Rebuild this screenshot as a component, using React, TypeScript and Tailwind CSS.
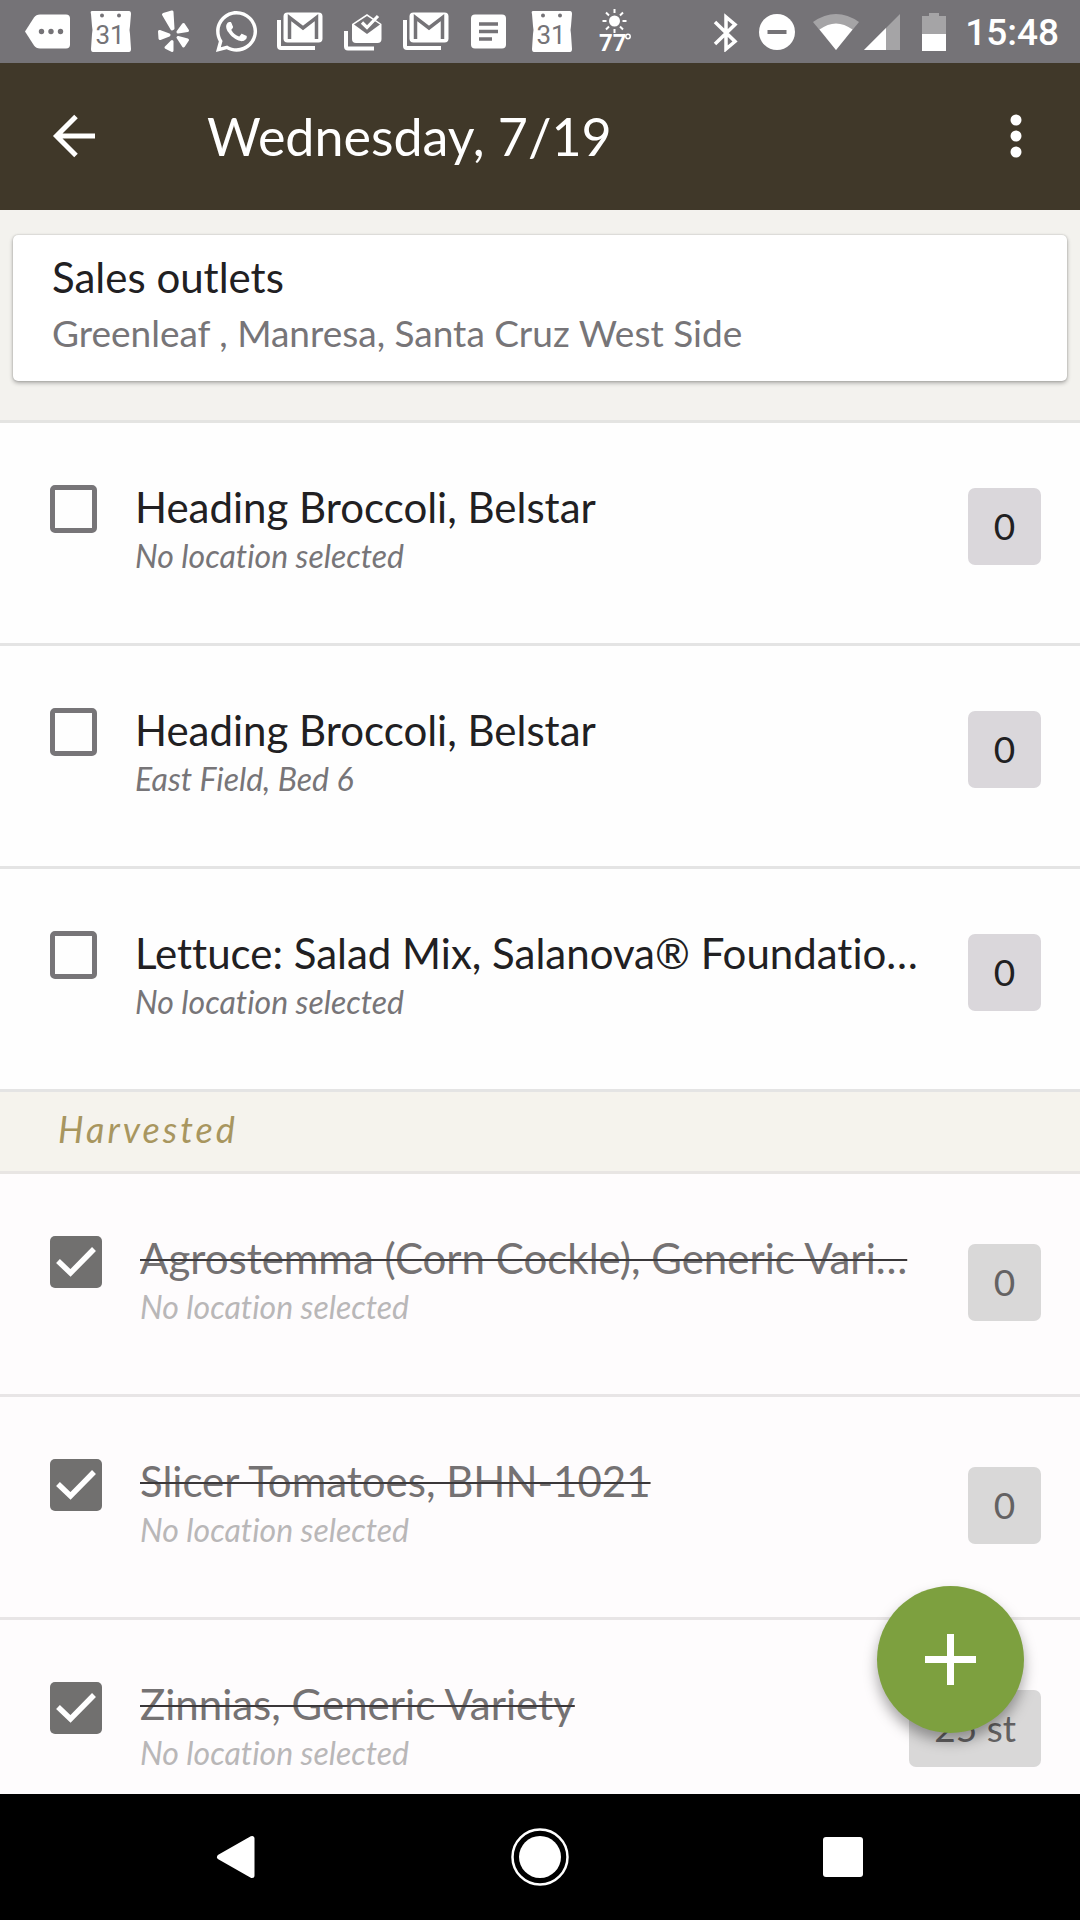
import React, { useState } from "react";
import { FaWhatsapp, FaYelp } from "react-icons/fa";

type Item = { id: number; name: string; place: string; amount: string; done: boolean };

const ITEMS: Item[] = [
  { id: 1, name: "Heading Broccoli, Belstar", place: "No location selected", amount: "0", done: false },
  { id: 2, name: "Heading Broccoli, Belstar", place: "East Field, Bed 6", amount: "0", done: false },
  { id: 3, name: "Lettuce: Salad Mix, Salanova® Foundatio…", place: "No location selected", amount: "0", done: false },
  { id: 4, name: "Agrostemma (Corn Cockle), Generic Vari…", place: "No location selected", amount: "0", done: true },
  { id: 5, name: "Slicer Tomatoes, BHN-1021", place: "No location selected", amount: "0", done: true },
  { id: 6, name: "Zinnias, Generic Variety", place: "No location selected", amount: "25 st", done: true },
];

function Cell({ children }: { children: React.ReactNode }) {
  return (
    <svg viewBox="0 0 63 63" className="h-[63px] w-[63px] shrink-0" fill="#fff" aria-hidden="true">
      {children}
    </svg>
  );
}

function CalendarIcon() {
  return (
    <Cell>
      <path d="M13 11h37q2 0 2 3l-1 12q-1 4 0 8l1 15q0 3-2 3H14q-2 0-2-3l1-15q1-4 0-8l-1-12q-1-3 1-3z" />
      <circle cx="23" cy="15.500" r="2" fill="#757377" />
      <circle cx="40" cy="15.500" r="2" fill="#757377" />
      <text x="31" y="44" textAnchor="middle" fill="#757377" className="font-['Roboto'] text-[26px]">
        31
      </text>
    </Cell>
  );
}

function GmailIcon() {
  return (
    <Cell>
      <path d="M9 20h4v26h34v4H13q-4 0-4-4z" />
      <path d="M19.500 12.500h31q4 0 4 4v22q0 4-4 4h-31q-4 0-4-4v-22q0-4 4-4z" />
      <path d="M21.500 39V17.500L35 28l13.500-10.500V39" fill="none" stroke="#757377" strokeWidth="3.500" />
    </Cell>
  );
}

function StatusBar() {
  return (
    <header className="flex h-[63px] shrink-0 items-center bg-[#757377] pl-4 pr-[21px] text-white">
      <Cell>
        <path d="M9 31.500l9-14q2-3 6-3h26q4 0 4 4v26q0 4-4 4H24q-4 0-6-3z" />
        <g fill="#757377">
          <circle cx="25.500" cy="31.500" r="2.700" />
          <circle cx="35" cy="31.500" r="2.700" />
          <circle cx="44.500" cy="31.500" r="2.700" />
        </g>
      </Cell>
      <CalendarIcon />
      <Cell>
        <g stroke="#fff" strokeWidth="3" strokeLinejoin="round">
          <path d="M21.500 14.500l8.500-2.500 1 16.500-1 .5z" />
          <path d="M17.500 31.500l9.500 3.500-9 3.500z" />
          <path d="M36 32l5.500-7.500 4 6z" />
          <path d="M36 37.500l9.500 2.500-4 6z" />
          <path d="M30 41.500v9l-6-3z" />
        </g>
      </Cell>
      <span className="flex w-[63px] shrink-0 justify-center">
        <FaWhatsapp size={47} aria-hidden="true" />
      </span>
      <GmailIcon />
      <Cell>
        <path d="M13 31h4v15.500h26v4H17q-4 0-4-4z" />
        <path d="M21 24l15-10 14.500 10v15q0 4-4 4H25q-4 0-4-4z" />
        <path d="M23 24.500l13-8.500 13 8.500L36 34z" fill="#757377" />
        <path d="M31 22.500l5 5L47 16" fill="none" stroke="#fff" strokeWidth="3.200" />
      </Cell>
      <GmailIcon />
      <Cell>
        <rect x="14" y="14.500" width="35" height="34" rx="4" />
        <path d="M22 24h19M22 31.500h19M22 39h13" stroke="#757377" strokeWidth="3.500" />
      </Cell>
      <CalendarIcon />
      <Cell>
        <circle cx="31.500" cy="21" r="5.500" />
        <path
          d="M31.500 9v4M31.500 29v4M19.500 21h4M39.500 21h4M23 12.500l3 3M40 12.500l-3 3M23 29.500l3-3M40 29.500l-3-3"
          stroke="#fff"
          strokeWidth="2"
        />
        <text x="16" y="51" className="font-['Roboto'] text-[24px] font-bold">
          77
        </text>
        <circle cx="45" cy="36.500" r="2.200" fill="none" stroke="#fff" strokeWidth="1.500" />
      </Cell>

      <svg viewBox="0 0 26 40" className="ml-auto h-10 w-[26px]" fill="none" stroke="#fff" strokeWidth="3.500" aria-hidden="true">
        <path d="M2 10l20 19.500-9 7.500V5L22 12.500 2 32" />
      </svg>
      <svg viewBox="0 0 36 36" className="ml-5 h-9 w-9" aria-hidden="true">
        <circle cx="18" cy="18" r="18" fill="#fff" />
        <path d="M8.500 18h19" stroke="#757377" strokeWidth="4" />
      </svg>
      <svg viewBox="0 0 46 36" className="ml-[18px] h-9 w-[46px]" fill="#fff" aria-hidden="true">
        <path d="M23 36L0 8Q23-8 46 8z" opacity=".35" />
        <path d="M23 36L6.500 15.500Q23 3.500 39.500 15.500z" />
      </svg>
      <svg viewBox="0 0 36 36" className="ml-[5px] h-9 w-9" fill="#fff" aria-hidden="true">
        <path d="M0 36L36 0v36z" opacity=".35" />
        <path d="M0 36L22 14v22z" />
      </svg>
      <svg viewBox="0 0 24 38" className="ml-[22px] h-[38px] w-6" fill="#fff" aria-hidden="true">
        <path d="M0 3h7V0h10v3h7v18H0z" opacity=".35" />
        <path d="M0 21h24v17H0z" />
      </svg>
      <time className="ml-[19px] pt-0.5 font-['Roboto',sans-serif] text-[37px] font-medium leading-none">15:48</time>
    </header>
  );
}

function Row({ item, onToggle }: { item: Item; onToggle: () => void }) {
  const { done } = item;
  const field = `item-${item.id}`;
  return (
    <li
      className={
        done
          ? "flex h-[223px] items-start border-b-3 border-[#e8e5e6] bg-[#fefcfd] pl-[50px] pr-[39px]"
          : "flex h-[223px] items-start border-b-3 border-[#e4e4e4] bg-[#fefefe] pl-[50px] pr-[39px]"
      }
    >
      <span className="relative mt-[62px] shrink-0">
        <input
          id={field}
          type="checkbox"
          checked={done}
          onChange={onToggle}
          className="block h-12 w-[47px] appearance-none rounded-[5px] border-[5px] border-[#777578] checked:h-[52px] checked:w-[52px] checked:border-0 checked:bg-[#71706f]"
        />
        {done && (
          <svg viewBox="0 0 52 52" className="pointer-events-none absolute inset-0 h-full w-full" aria-hidden="true">
            <path d="M8 25l12.500 12L44 13" fill="none" stroke="#fff" strokeWidth="5.500" />
          </svg>
        )}
      </span>
      <label htmlFor={field} className="ml-[38px] mt-[58px] min-w-0 grow whitespace-nowrap">
        <span
          className={
            done
              ? "block text-[42px] leading-[52px] text-[#757273]"
              : "block text-[42px] leading-[52px] text-[#212022]"
          }
        >
          <span className={done ? "line-through decoration-[#3a3739] decoration-2" : ""}>{item.name}</span>
        </span>
        <span
          className={
            done
              ? "block text-[32px] italic leading-[46px] text-[#b9b7b8]"
              : "block text-[32px] italic leading-[46px] text-[#777578]"
          }
        >
          {item.place}
        </span>
      </label>
      <button
        type="button"
        className={
          done
            ? "mt-[70px] h-[77px] min-w-[73px] shrink-0 rounded-[7px] bg-[#d9d8d8] px-[25px] pb-0.5 text-[37px] leading-[74px] text-[#646263]"
            : "mt-[65px] h-[77px] min-w-[73px] shrink-0 rounded-[7px] bg-[#dad7db] px-[25px] pb-0.5 text-[37px] leading-[74px] text-[#212022]"
        }
      >
        {item.amount}
      </button>
    </li>
  );
}

export default function App() {
  const [items, setItems] = useState(ITEMS);
  const toggle = (id: number) =>
    setItems((list) => list.map((it) => (it.id === id ? { ...it, done: !it.done } : it)));
  const rows = (done: boolean) =>
    items.filter((it) => it.done === done).map((it) => <Row key={it.id} item={it} onToggle={() => toggle(it.id)} />);

  return (
    <div className="flex h-screen flex-col bg-[#fefcfd] font-['Lato',sans-serif] [font-variant-ligatures:none]">
      <StatusBar />
      <div className="flex h-[147px] shrink-0 items-center bg-[#403829] px-[50px] pb-0.5 text-white">
        <button type="button" aria-label="Back">
          <svg viewBox="0 0 48 48" className="h-12 w-12" fill="none" stroke="#fff" strokeWidth="5" aria-hidden="true">
            <path d="M45 24H7M26 4.500L6.500 24 26 43.500" />
          </svg>
        </button>
        <h1 className="ml-[109px] grow text-[52px] leading-[64px]">Wednesday, 7/19</h1>
        <button type="button" aria-label="More options">
          <svg viewBox="0 0 28 44" className="h-11 w-7" fill="#fff" aria-hidden="true">
            <circle cx="14" cy="6" r="5.500" />
            <circle cx="14" cy="22" r="5.500" />
            <circle cx="14" cy="38" r="5.500" />
          </svg>
        </button>
      </div>

      <div className="relative min-h-0 grow">
        <main className="h-full overflow-y-auto [scrollbar-width:none]">
          <section className="border-b-3 border-[#e4e4e2] bg-[#f3f2ee] px-[13px] pb-[39px] pt-[25px]">
            <div className="rounded-[5px] bg-white px-[39px] pb-[18px] pt-4 shadow-[0_2px_4px_rgba(0,0,0,0.3),0_0_2px_rgba(0,0,0,0.2)]">
              <h2 className="text-[42px] leading-[52px] text-[#212022]">Sales outlets</h2>
              <p className="text-[37px] leading-[60px] text-[#777578]">Greenleaf , Manresa, Santa Cruz West Side</p>
            </div>
          </section>
          <ul>{rows(false)}</ul>
          <h3 className="border-b-3 border-[#e8e5e3] bg-[#f5f3ed] pb-1 pl-[58px] text-[36px] italic leading-[75px] tracking-[3px] text-[#a8965f]">
            Harvested
          </h3>
          <ul>{rows(true)}</ul>
        </main>
        <button
          type="button"
          aria-label="Add"
          className="absolute bottom-[61px] right-14 flex size-[147px] items-center justify-center rounded-full bg-[#7da03f] shadow-[0_8px_14px_rgba(0,0,0,0.35)]"
        >
          <svg viewBox="0 0 51 51" className="size-[51px]" stroke="#fff" strokeWidth="7" aria-hidden="true">
            <path d="M25.500 0v51M0 25.500h51" />
          </svg>
        </button>
      </div>

      <nav className="grid h-[126px] shrink-0 grid-cols-3 justify-items-center bg-black px-[85px]">
        <button type="button" aria-label="System back">
          <svg viewBox="0 0 58 58" className="size-[58px]" fill="#fff" stroke="#fff" strokeWidth="5" strokeLinejoin="round" aria-hidden="true">
            <path d="M11.500 29L44 10.500v37z" />
          </svg>
        </button>
        <button type="button" aria-label="Home">
          <svg viewBox="0 0 58 58" className="size-[58px]" fill="#fff" aria-hidden="true">
            <circle cx="29" cy="29" r="27.500" fill="none" stroke="#fff" strokeWidth="2.500" />
            <circle cx="29" cy="29" r="21" />
          </svg>
        </button>
        <button type="button" aria-label="Recent apps">
          <svg viewBox="0 0 58 58" className="size-[58px]" fill="#fff" aria-hidden="true">
            <rect x="9" y="9" width="40" height="40" rx="3" />
          </svg>
        </button>
      </nav>
    </div>
  );
}
